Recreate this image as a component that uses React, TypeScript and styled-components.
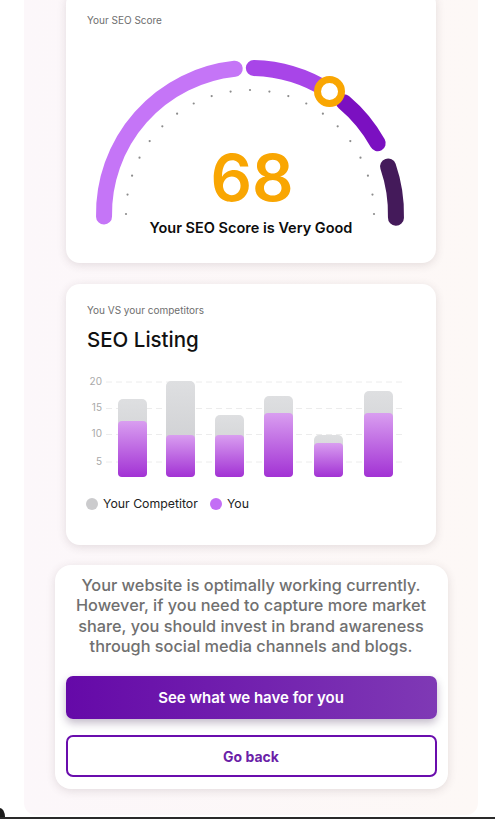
import React from 'react';
import styled, { createGlobalStyle } from 'styled-components';

const GlobalStyle = createGlobalStyle`
  html, body {
    margin: 0;
    padding: 0;
    background: #ffffff;
    font-family: Inter, "Noto Sans", "Liberation Sans", sans-serif;
  }
  * {
    box-sizing: border-box;
  }
`;

const Frame = styled.div`
  position: relative;
  height: 819px;
  overflow: hidden;
  border-bottom: 2px solid #2a2a2a;
  &::before {
    content: '';
    position: absolute;
    left: 0;
    bottom: 0;
    width: 5px;
    height: 9px;
    background: #1c1c1c;
    border-top-right-radius: 100%;
  }
`;

const Panel = styled.div`
  margin-left: 24px;
  width: 454px;
  height: 825px;
  margin-top: -10px;
  display: flex;
  flex-direction: column;
  align-items: center;
  padding-bottom: 25px;
  background: linear-gradient(90deg, #fcf7fa 0%, #fdf8f6 100%);
  border-radius: 0 0 12px 12px;
`;

const Card = styled.div<{ $wide?: boolean }>`
  width: ${(p) => (p.$wide ? '393px' : '370px')};
  background: #ffffff;
  border-radius: ${(p) => (p.$wide ? '16px' : '14px')};
  box-shadow: 0 2px 10px rgba(70, 50, 60, 0.14);
`;

const GaugeCard = styled(Card)`
  padding: 24px 0 18px;
`;

const ListingCard = styled(Card)`
  margin-top: 21px;
  padding: 20px 0 33px;
`;

const AdviceCard = styled(Card)`
  margin-top: 20px;
  padding: 10px 11px 12px;
  display: flex;
  flex-direction: column;
`;

const SmallLabel = styled.div`
  padding: 0 21px;
  font-size: 10px;
  line-height: 12px;
  color: #6e6e6e;
`;

const Title = styled.div`
  margin-top: 12px;
  padding: 0 21px;
  font-size: 20.5px;
  line-height: 24px;
  font-weight: 500;
  color: #111111;
`;

const GaugeWrap = styled.div`
  position: relative;
  margin-top: 14px;
  height: 205px;
  svg {
    display: block;
  }
`;

const ScoreValue = styled.div`
  position: absolute;
  left: 2px;
  right: 0;
  top: 105px;
  text-align: center;
  font-size: 65px;
  line-height: 1;
  font-weight: 600;
  color: #f9a602;
`;

const ScoreCaption = styled.div`
  position: absolute;
  left: 0;
  right: 0;
  top: 181px;
  text-align: center;
  font-size: 14.5px;
  line-height: 1;
  font-weight: 600;
  color: #0d0d0d;
`;

const Chart = styled.svg`
  display: block;
  margin-top: 20px;
`;

const Legend = styled.div`
  margin-top: 14px;
  padding: 0 20px;
  display: flex;
  align-items: center;
  gap: 12px;
`;

const LegendItem = styled.div`
  display: flex;
  align-items: center;
  gap: 5px;
  font-size: 12.3px;
  line-height: 16px;
  color: #222222;
`;

const Swatch = styled.span<{ $color: string }>`
  width: 12px;
  height: 12px;
  border-radius: 50%;
  background: ${(p) => p.$color};
`;

const Advice = styled.p`
  margin: 0;
  text-align: center;
  font-size: 16.3px;
  line-height: 20.3px;
  font-weight: 500;
  color: #707070;
`;

const PrimaryButton = styled.button`
  margin-top: 20px;
  height: 43px;
  border: 0;
  border-radius: 7px;
  background: linear-gradient(90deg, #6509a8 0%, #7f39b5 100%);
  box-shadow: 0 4px 8px rgba(40, 10, 60, 0.28);
  color: #ffffff;
  font-family: inherit;
  font-size: 15px;
  font-weight: 600;
  cursor: pointer;
`;

const OutlineButton = styled.button`
  margin-top: 16px;
  height: 42px;
  border: 2px solid #6a0dad;
  border-radius: 7px;
  background: #ffffff;
  color: #6b1fa8;
  font-family: inherit;
  font-size: 14px;
  font-weight: 700;
  cursor: pointer;
`;

const CX = 184;
const CY = 174;
const R = 146;

const pt = (deg: number, r: number) => {
  const a = (deg * Math.PI) / 180;
  return [CX + r * Math.cos(a), CY - r * Math.sin(a)];
};

const arcPath = (from: number, to: number, r: number) => {
  const [x1, y1] = pt(from, r);
  const [x2, y2] = pt(to, r);
  const large = Math.abs(from - to) > 180 ? 1 : 0;
  return `M ${x1} ${y1} A ${r} ${r} 0 ${large} 1 ${x2} ${y2}`;
};

const segments = [
  { from: 181, to: 96, color: '#c575f7' },
  { from: 88.5, to: 58, color: '#a845e8' },
  { from: 50, to: 29, color: '#7b10c1' },
  { from: 19, to: -1.5, color: '#441a5a' },
];

const dots = Array.from({ length: 21 }, (_, i) => pt(180 - i * 9, 124));

const Gauge = () => {
  const [kx, ky] = pt(57, R);
  return (
    <GaugeWrap>
      <svg width="370" height="205" viewBox="0 0 370 205">
        {dots.map(([x, y], i) => (
          <circle key={i} cx={x} cy={y} r="1.1" fill="#8c8c8c" />
        ))}
        {segments.map((s) => (
          <path
            key={s.from}
            d={arcPath(s.from, s.to, R)}
            fill="none"
            stroke={s.color}
            strokeWidth="16"
            strokeLinecap="round"
          />
        ))}
        <circle cx={kx} cy={ky} r="12" fill="#ffffff" stroke="#f9a602" strokeWidth="7" />
      </svg>
      <ScoreValue>68</ScoreValue>
      <ScoreCaption>Your SEO Score is Very Good</ScoreCaption>
    </GaugeWrap>
  );
};

const bars = [
  { x: 52, competitor: 78, you: 56 },
  { x: 100, competitor: 96, you: 42 },
  { x: 149, competitor: 62, you: 42 },
  { x: 198, competitor: 81, you: 64 },
  { x: 248, competitor: 42, you: 34 },
  { x: 298, competitor: 86, you: 64 },
];

const grid = [
  { y: 10, label: '20' },
  { y: 36.5, label: '15' },
  { y: 62.5, label: '10' },
  { y: 90, label: '5' },
];

const BASE = 105;

const ListingChart = () => (
  <Chart width="370" height="110" viewBox="0 0 370 110">
    <defs>
      <linearGradient id="gray" x1="0" y1="0" x2="0" y2="1">
        <stop offset="0" stopColor="#dedfe1" />
        <stop offset="1" stopColor="#c9cacd" />
      </linearGradient>
      <linearGradient id="purple" x1="0" y1="0" x2="0" y2="1">
        <stop offset="0" stopColor="#d99ef0" />
        <stop offset="1" stopColor="#a232d4" />
      </linearGradient>
    </defs>
    {grid.map((g) => (
      <g key={g.label}>
        <line x1="40" x2="339" y1={g.y} y2={g.y} stroke="#ececec" strokeWidth="1" strokeDasharray="6 4" />
        <text
          x="36"
          y={g.y}
          textAnchor="end"
          dominantBaseline="middle"
          fontSize="10"
          fill="#a9a9a9"
          fontFamily="Inter, sans-serif"
        >
          {g.label}
        </text>
      </g>
    ))}
    {bars.map((b) => (
      <g key={b.x}>
        <rect x={b.x} y={BASE - b.competitor} width="29" height={b.competitor} rx="5" fill="url(#gray)" />
        <rect x={b.x} y={BASE - b.you} width="29" height={b.you} rx="4" fill="url(#purple)" />
      </g>
    ))}
  </Chart>
);

const App = () => (
  <>
    <GlobalStyle />
    <Frame>
      <Panel>
        <GaugeCard>
          <SmallLabel>Your SEO Score</SmallLabel>
          <Gauge />
        </GaugeCard>
        <ListingCard>
          <SmallLabel>You VS your competitors</SmallLabel>
          <Title>SEO Listing</Title>
          <ListingChart />
          <Legend>
            <LegendItem>
              <Swatch $color="#cbcbcd" />
              Your Competitor
            </LegendItem>
            <LegendItem>
              <Swatch $color="#c36ef5" />
              You
            </LegendItem>
          </Legend>
        </ListingCard>
        <AdviceCard $wide>
          <Advice>
            Your website is optimally working currently.
            <br />
            However, if you need to capture more market
            <br />
            share, you should invest in brand awareness
            <br />
            through social media channels and blogs.
          </Advice>
          <PrimaryButton>See what we have for you</PrimaryButton>
          <OutlineButton>Go back</OutlineButton>
        </AdviceCard>
      </Panel>
    </Frame>
  </>
);

export default App;
